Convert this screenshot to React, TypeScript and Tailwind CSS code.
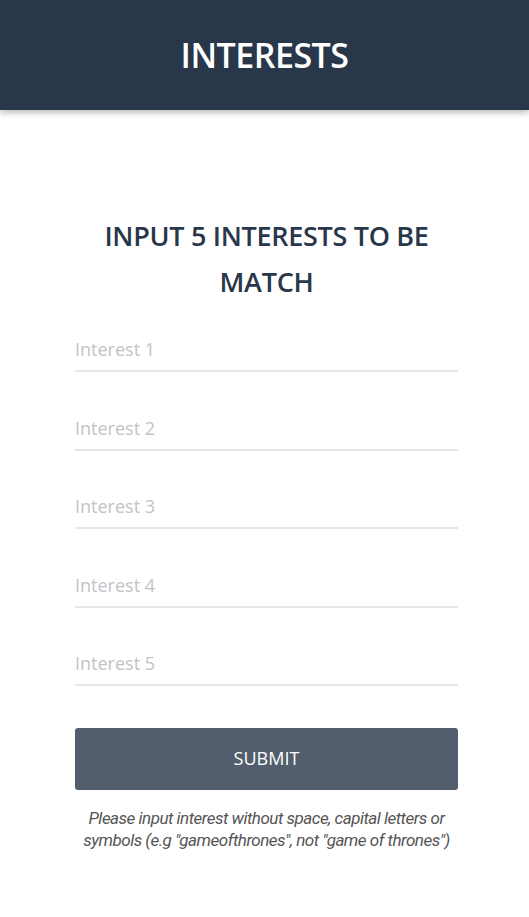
import React from "react";

const App: React.FC = () => {
	const interests = [1, 2, 3, 4, 5];
	return (
		<div className="min-h-screen bg-white" style={{ fontFamily: '"Open Sans", "Noto Sans", sans-serif' }}>
			<div className="h-[110px] bg-[#283749] flex items-center justify-center shadow-[0_3px_6px_rgba(0,0,0,0.25)]">
				<h1 className="text-[34px] text-white tracking-[-0.5px] font-semibold">INTERESTS</h1>
			</div>
			<div className="pl-[75px] pr-[71px] pt-[103px]">
				<h2 className="text-center text-[#283749] text-[27px] leading-[46px] font-semibold tracking-[-0.3px] px-6">
					INPUT 5 INTERESTS TO BE MATCH
				</h2>
				<form className="mt-[23px] flex flex-col gap-[34.5px]" onSubmit={(e) => e.preventDefault()}>
					{interests.map((n) => (
						<input
							key={n}
							type="text"
							placeholder={`Interest ${n}`}
							className="w-full h-[44px] border-b-2 border-[#e4e6e8] text-[18px] text-[#283749] placeholder:text-[#bfc4c9] outline-none bg-transparent"
						/>
					))}
					<button
						type="submit"
						className="mt-[7px] h-[62px] w-full rounded-[3px] bg-[#525e6d] text-white text-[18px]"
					>
						SUBMIT
					</button>
				</form>
				<p className="mt-[17px] text-center italic text-[17px] leading-[22px] text-[#555] tracking-[-0.5px]" style={{ fontFamily: '"Roboto", sans-serif' }}>
					Please input interest without space, capital letters or symbols (e.g "gameofthrones", not "game of thrones")
				</p>
			</div>
		</div>
	);
};

export default App;
